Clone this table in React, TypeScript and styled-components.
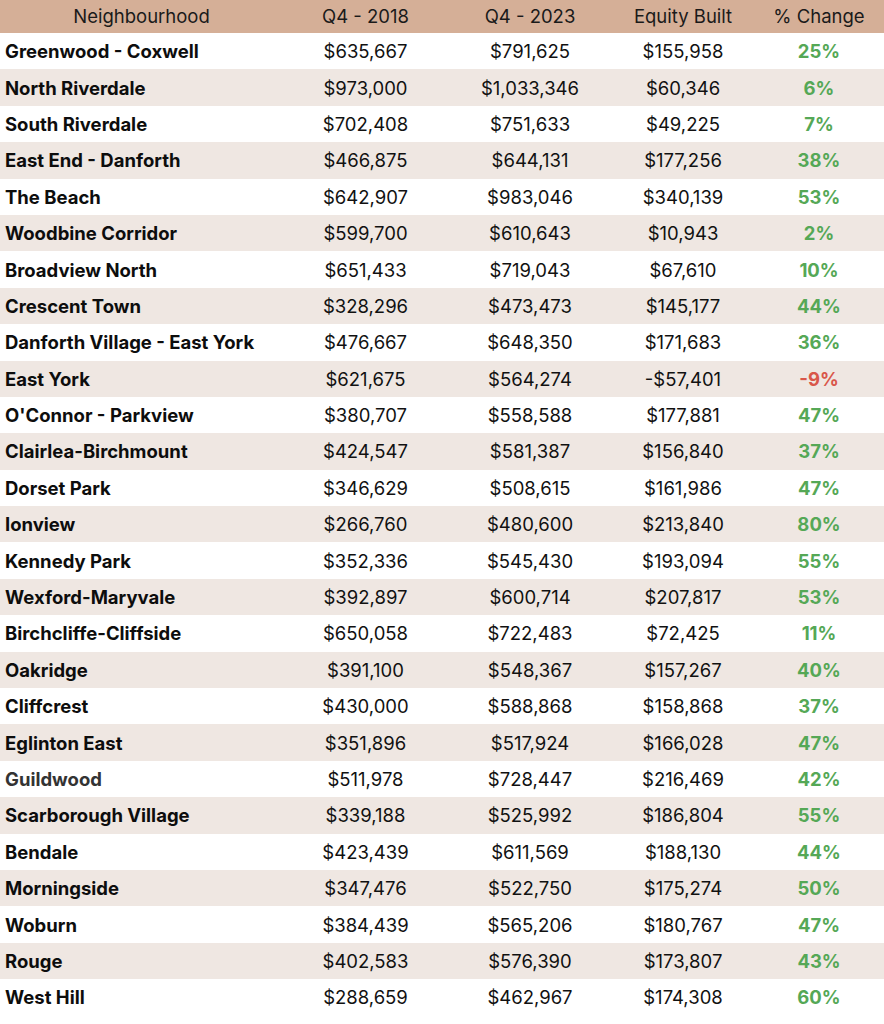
import React from 'react'
import styled, { createGlobalStyle } from 'styled-components'

const GlobalStyle = createGlobalStyle`
  html, body {
    margin: 0;
    padding: 0;
    background: #ffffff;
  }
  body {
    font-family: Inter, 'Noto Sans', Arial, sans-serif;
    color: #111111;
  }
`

type Row = [string, string, string, string, string]

const rows: Row[] = [
  ['Greenwood - Coxwell', '$635,667', '$791,625', '$155,958', '25%'],
  ['North Riverdale', '$973,000', '$1,033,346', '$60,346', '6%'],
  ['South Riverdale', '$702,408', '$751,633', '$49,225', '7%'],
  ['East End - Danforth', '$466,875', '$644,131', '$177,256', '38%'],
  ['The Beach', '$642,907', '$983,046', '$340,139', '53%'],
  ['Woodbine Corridor', '$599,700', '$610,643', '$10,943', '2%'],
  ['Broadview North', '$651,433', '$719,043', '$67,610', '10%'],
  ['Crescent Town', '$328,296', '$473,473', '$145,177', '44%'],
  ['Danforth Village - East York', '$476,667', '$648,350', '$171,683', '36%'],
  ['East York', '$621,675', '$564,274', '-$57,401', '-9%'],
  ["O'Connor - Parkview", '$380,707', '$558,588', '$177,881', '47%'],
  ['Clairlea-Birchmount', '$424,547', '$581,387', '$156,840', '37%'],
  ['Dorset Park', '$346,629', '$508,615', '$161,986', '47%'],
  ['Ionview', '$266,760', '$480,600', '$213,840', '80%'],
  ['Kennedy Park', '$352,336', '$545,430', '$193,094', '55%'],
  ['Wexford-Maryvale', '$392,897', '$600,714', '$207,817', '53%'],
  ['Birchcliffe-Cliffside', '$650,058', '$722,483', '$72,425', '11%'],
  ['Oakridge', '$391,100', '$548,367', '$157,267', '40%'],
  ['Cliffcrest', '$430,000', '$588,868', '$158,868', '37%'],
  ['Eglinton East', '$351,896', '$517,924', '$166,028', '47%'],
  ['Guildwood', '$511,978', '$728,447', '$216,469', '42%'],
  ['Scarborough Village', '$339,188', '$525,992', '$186,804', '55%'],
  ['Bendale', '$423,439', '$611,569', '$188,130', '44%'],
  ['Morningside', '$347,476', '$522,750', '$175,274', '50%'],
  ['Woburn', '$384,439', '$565,206', '$180,767', '47%'],
  ['Rouge', '$402,583', '$576,390', '$173,807', '43%'],
  ['West Hill', '$288,659', '$462,967', '$174,308', '60%'],
]

const Table = styled.div`
  width: 884px;
  display: grid;
  grid-template-columns: 283px 165px 164px 142px 130px;
  grid-auto-rows: 36.4px;
  grid-template-rows: 33px;
`

const HeaderCell = styled.div`
  background: #d5af97;
  color: #1a1a1a;
  font-size: 18.5px;
  font-weight: 400;
  display: flex;
  align-items: center;
  justify-content: center;
  padding-bottom: 1px;
`

const Cell = styled.div<{ $shaded: boolean; $align?: 'left' | 'center' }>`
  background: ${p => (p.$shaded ? '#efe7e2' : '#ffffff')};
  display: flex;
  align-items: center;
  justify-content: ${p => (p.$align === 'left' ? 'flex-start' : 'center')};
  padding-left: ${p => (p.$align === 'left' ? '5px' : '0')};
  font-size: 18.5px;
  white-space: nowrap;
`

const NameCell = styled(Cell)<{ $muted: boolean }>`
  font-weight: 700;
  color: ${p => (p.$muted ? '#333333' : '#0d0d0d')};
`

const ValueCell = styled(Cell)`
  font-weight: 400;
  color: #111111;
`

const ChangeCell = styled(Cell)<{ $negative: boolean }>`
  font-weight: 700;
  color: ${p => (p.$negative ? '#d9574a' : '#55a856')};
`

const headers = ['Neighbourhood', 'Q4 - 2018', 'Q4 - 2023', 'Equity Built', '% Change']

const App = () => {
  return (
    <>
      <GlobalStyle />
      <Table>
        {headers.map(h => (
          <HeaderCell key={h}>{h}</HeaderCell>
        ))}
        {rows.map(([name, q18, q23, equity, change], i) => {
          const shaded = i % 2 === 1
          return (
            <React.Fragment key={name}>
              <NameCell $shaded={shaded} $align='left' $muted={name === 'Guildwood'}>
                {name}
              </NameCell>
              <ValueCell $shaded={shaded}>{q18}</ValueCell>
              <ValueCell $shaded={shaded}>{q23}</ValueCell>
              <ValueCell $shaded={shaded}>{equity}</ValueCell>
              <ChangeCell $shaded={shaded} $negative={change.startsWith('-')}>
                {change}
              </ChangeCell>
            </React.Fragment>
          )
        })}
      </Table>
    </>
  )
}

export default App
